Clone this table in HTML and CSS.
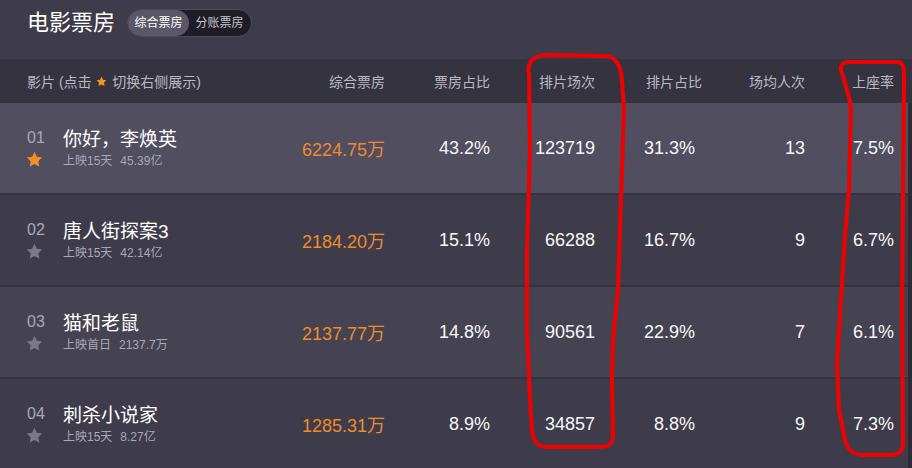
FILE: index.html
```html
<!DOCTYPE html>
<html lang="zh-CN">
<head>
<meta charset="utf-8">
<title>电影票房</title>
<link rel="stylesheet" href="styles.css">
</head>
<body>
<div class="page">
  <div class="titlebar">
    <h1 class="title">电影票房</h1>
    <div class="toggle">
      <span class="toggle-item active">综合票房</span>
      <span class="toggle-item">分账票房</span>
    </div>
  </div>

  <div class="thead">
    <div class="th th-film">影片 (点击 <svg class="star-sm" viewBox="0 0 16 16"><path d="M8 .8l2.2 4.6 5 .7-3.6 3.5.9 5L8 12.2l-4.5 2.4.9-5L.8 6.1l5-.7z"/></svg> 切换右侧展示)</div>
    <div class="th">综合票房</div>
    <div class="th">票房占比</div>
    <div class="th">排片场次</div>
    <div class="th th-shift">排片占比</div>
    <div class="th">场均人次</div>
    <div class="th">上座率</div>
  </div>

  <div class="rows">
    <div class="row row-hl">
      <div class="film">
        <div class="rank"><span class="rank-no">01</span><svg class="star star-on" viewBox="0 0 16 16"><path d="M8 .8l2.2 4.6 5 .7-3.6 3.5.9 5L8 12.2l-4.5 2.4.9-5L.8 6.1l5-.7z"/></svg></div>
        <div class="info"><div class="name">你好，李焕英</div><div class="sub"><span>上映15天</span><span class="sum">45.39亿</span></div></div>
      </div>
      <div class="cell money">6224.75万</div>
      <div class="cell">43.2%</div>
      <div class="cell">123719</div>
      <div class="cell">31.3%</div>
      <div class="cell">13</div>
      <div class="cell">7.5%</div>
    </div>

    <div class="row">
      <div class="film">
        <div class="rank"><span class="rank-no">02</span><svg class="star" viewBox="0 0 16 16"><path d="M8 .8l2.2 4.6 5 .7-3.6 3.5.9 5L8 12.2l-4.5 2.4.9-5L.8 6.1l5-.7z"/></svg></div>
        <div class="info"><div class="name">唐人街探案3</div><div class="sub"><span>上映15天</span><span class="sum">42.14亿</span></div></div>
      </div>
      <div class="cell money">2184.20万</div>
      <div class="cell">15.1%</div>
      <div class="cell">66288</div>
      <div class="cell">16.7%</div>
      <div class="cell">9</div>
      <div class="cell">6.7%</div>
    </div>

    <div class="row row-alt">
      <div class="film">
        <div class="rank"><span class="rank-no">03</span><svg class="star" viewBox="0 0 16 16"><path d="M8 .8l2.2 4.6 5 .7-3.6 3.5.9 5L8 12.2l-4.5 2.4.9-5L.8 6.1l5-.7z"/></svg></div>
        <div class="info"><div class="name">猫和老鼠</div><div class="sub"><span>上映首日</span><span class="sum">2137.7万</span></div></div>
      </div>
      <div class="cell money">2137.77万</div>
      <div class="cell">14.8%</div>
      <div class="cell">90561</div>
      <div class="cell">22.9%</div>
      <div class="cell">7</div>
      <div class="cell">6.1%</div>
    </div>

    <div class="row">
      <div class="film">
        <div class="rank"><span class="rank-no">04</span><svg class="star" viewBox="0 0 16 16"><path d="M8 .8l2.2 4.6 5 .7-3.6 3.5.9 5L8 12.2l-4.5 2.4.9-5L.8 6.1l5-.7z"/></svg></div>
        <div class="info"><div class="name">刺杀小说家</div><div class="sub"><span>上映15天</span><span class="sum">8.27亿</span></div></div>
      </div>
      <div class="cell money">1285.31万</div>
      <div class="cell">8.9%</div>
      <div class="cell">34857</div>
      <div class="cell">8.8%</div>
      <div class="cell">9</div>
      <div class="cell">7.3%</div>
    </div>
  </div>

  <svg class="marks" viewBox="0 0 912 468" width="912" height="468">
    <path d="M529,74 C526,62 534,56 545,55 L606,56 C616,57 621,66 622,80 L624,110 L621,200 L618,290 L613,340 L612,380 L613,438 C612,446 605,447 598,447 L546,447 C536,446 533,440 532,430 L530,400 L527,330 L527,250 L530,150 L529,74 Z"/>
    <path d="M843,76 C838,66 842,62 850,62 L898,62 C904,63 904,69 904,80 L903,200 L902,300 L903,440 C904,450 900,455 890,455 L862,455 C852,454 848,450 845,440 L839,410 L837,365 L841,300 L845,235 L849,190 L851,110 C850,95 845,86 843,76 Z"/>
  </svg>
</div>
</body>
</html>
```

FILE: styles.css
```css
html, body {
  margin: 0;
  padding: 0;
}

body {
  background: #3e3c4a;
  font-family: "Liberation Sans", "Noto Sans CJK SC", sans-serif;
  color: #f5f5f7;
  overflow: hidden;
}

.page {
  position: relative;
  width: 912px;
  height: 468px;
  overflow: hidden;
  background: #3e3c4a;
}

/* title bar */
.titlebar {
  height: 59px;
  box-sizing: border-box;
  padding: 9px 27px 0;
  display: flex;
  align-items: flex-start;
  gap: 12px;
}

.title {
  margin: 0;
  font-size: 22px;
  font-weight: 400;
  line-height: 28px;
  color: #ffffff;
}

.toggle {
  display: flex;
  align-items: center;
  height: 28px;
  box-sizing: border-box;
  border: 1px solid #4d4b5a;
  border-radius: 14px;
  background: #1e1c26;
  padding-right: 1px;
}

.toggle-item {
  height: 26px;
  line-height: 26px;
  padding: 0 6.5px;
  border-radius: 13px;
  font-size: 12px;
  color: #c4c3cc;
}

.toggle-item.active {
  background: #5a5868;
  color: #ffffff;
}

/* table grid */
.thead,
.row {
  display: grid;
  grid-template-columns: 280px 105px 105px 105px 100px 110px 89px 1fr;
  align-items: center;
}

.thead {
  height: 44px;
  background: #353340;
  font-size: 14px;
  color: #bab9c3;
}

.th {
  text-align: right;
}

.th-shift {
  margin-right: -7px;
}

.th-film {
  text-align: left;
  padding-left: 27px;
  display: flex;
  align-items: center;
  white-space: pre;
}

.star-sm {
  width: 11px;
  height: 11px;
  fill: #f39321;
  margin: 0 1px;
}

.rows {
  display: flex;
  flex-direction: column;
  gap: 2px;
  background: #363441;
  border-right: 4px solid #2d2c36;
}

.row {
  height: 90px;
  background: #3e3c4a;
}

.row-hl {
  background: #504e5f;
}

.row-alt {
  background: #454351;
}

.film {
  display: flex;
  align-items: center;
  padding-left: 27px;
}

.rank {
  width: 36px;
  display: flex;
  flex-direction: column;
  align-items: flex-start;
  gap: 4px;
}

.rank-no {
  font-size: 16px;
  line-height: 18px;
  color: #a9a8b6;
}

.star {
  width: 17px;
  height: 17px;
  fill: #7b7989;
  margin-left: -1px;
}

.star-on {
  fill: #f5901f;
}

.info {
  display: flex;
  flex-direction: column;
  gap: 1px;
}

.name {
  font-size: 19px;
  line-height: 24px;
  color: #ffffff;
}

.sub {
  font-size: 12px;
  line-height: 16px;
  color: #a9a8b6;
}

.sum {
  margin-left: 8px;
}

.cell {
  text-align: right;
  font-size: 18px;
  color: #f7f7f9;
}

.money {
  color: #ef8b2b;
}

/* hand-drawn annotation overlay */
.marks {
  position: absolute;
  left: 0;
  top: 0;
  pointer-events: none;
  fill: none;
  stroke: #f20000;
  stroke-width: 4;
  stroke-linejoin: round;
  stroke-linecap: round;
}
```
